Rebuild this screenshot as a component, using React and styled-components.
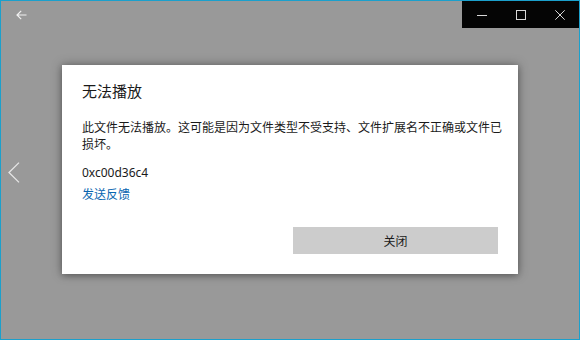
import React from "react";
import styled, { createGlobalStyle } from "styled-components";

const GlobalStyle = createGlobalStyle`
  html, body {
    margin: 0;
    padding: 0;
    background: #999999;
  }
  * {
    box-sizing: border-box;
  }
`;

const Window = styled.div`
  position: relative;
  width: 580px;
  height: 340px;
  border: 1px solid #1ba0cc;
  background: #999999;
  font-family: "Noto Sans", "Noto Sans CJK SC", sans-serif;
  overflow: hidden;
  display: flex;
  flex-direction: column;
`;

const TitleBar = styled.div`
  display: flex;
  justify-content: space-between;
  align-items: flex-start;
  height: 27px;
`;

const BackButton = styled.div`
  width: 40px;
  height: 27px;
  display: flex;
  align-items: center;
  justify-content: center;
  color: #f2f2f2;
`;

const Controls = styled.div`
  display: flex;
  background: #050505;
  height: 27px;
`;

const ControlButton = styled.div`
  width: 39px;
  height: 27px;
  display: flex;
  align-items: center;
  justify-content: center;
  color: #d8d8d8;
`;

const Stage = styled.div`
  flex: 1;
  display: flex;
  align-items: center;
  padding-left: 7px;
  padding-bottom: 22px;
`;

const Chevron = styled.div`
  width: 12px;
  height: 21px;
  color: #e6e6e6;
  display: flex;
`;

const Overlay = styled.div`
  position: absolute;
  inset: 0;
  display: flex;
  align-items: center;
  justify-content: center;
  padding-bottom: 1px;
`;

const Dialog = styled.div`
  width: 456px;
  height: 209px;
  background: #ffffff;
  box-shadow: 0 0 10px rgba(0, 0, 0, 0.35), 0 2px 6px rgba(0, 0, 0, 0.2);
  padding: 16px 20px 0 20px;
  display: flex;
  flex-direction: column;
  color: #1a1a1a;
`;

const Title = styled.div`
  font-family: "Noto Sans CJK SC", sans-serif;
  font-size: 15px;
  line-height: 20px;
  margin-bottom: 17px;
`;

const Body = styled.div`
  font-family: "Noto Sans CJK SC", sans-serif;
  font-size: 12px;
  line-height: 17px;
  margin-right: -8px;
  margin-bottom: ${(p) => p.$gap || 0}px;
`;

const Code = styled.div`
  font-size: 12px;
  line-height: 17px;
  margin-bottom: 4px;
`;

const Link = styled.a`
  font-family: "Noto Sans CJK SC", sans-serif;
  font-size: 12px;
  line-height: 17px;
  color: #0a66b0;
  text-decoration: none;
  align-self: flex-start;
`;

const Actions = styled.div`
  display: grid;
  grid-template-columns: 1fr 1fr;
  gap: 6px;
  margin-top: 25px;
`;

const CloseButton = styled.button`
  grid-column: 2;
  height: 27px;
  border: none;
  background: #cccccc;
  font-family: "Noto Sans CJK SC", sans-serif;
  font-size: 12px;
  color: #1a1a1a;
  padding: 0;
`;

const App = () => (
  <>
    <GlobalStyle />
    <Window>
      <TitleBar>
        <BackButton>
          <svg width="11" height="10" viewBox="0 0 11 10" fill="none" stroke="currentColor" strokeWidth="1.2">
            <path d="M10.5 5H1M5.2 0.8L1 5l4.2 4.2" />
          </svg>
        </BackButton>
        <Controls>
          <ControlButton>
            <svg width="10" height="10" viewBox="0 0 10 10" stroke="currentColor" strokeWidth="1">
              <path d="M0 5.5h10" />
            </svg>
          </ControlButton>
          <ControlButton>
            <svg width="10" height="10" viewBox="0 0 10 10" fill="none" stroke="currentColor" strokeWidth="1">
              <rect x="0.5" y="0.5" width="9" height="9" />
            </svg>
          </ControlButton>
          <ControlButton>
            <svg width="10" height="10" viewBox="0 0 10 10" stroke="currentColor" strokeWidth="1">
              <path d="M0.3 0.3l9.4 9.4M9.7 0.3L0.3 9.7" />
            </svg>
          </ControlButton>
        </Controls>
      </TitleBar>
      <Stage>
        <Chevron>
          <svg width="12" height="21" viewBox="0 0 12 21" fill="none" stroke="currentColor" strokeWidth="1.3">
            <path d="M11 0.6L1 10.5l10 9.9" />
          </svg>
        </Chevron>
      </Stage>
      <Overlay>
        <Dialog>
          <Title>无法播放</Title>
          <Body $gap={12}>
            此文件无法播放。这可能是因为文件类型不受支持、文件扩展名不正确或文件已损坏。
          </Body>
          <Code>0xc00d36c4</Code>
          <Link href="#">发送反馈</Link>
          <Actions>
            <CloseButton>关闭</CloseButton>
          </Actions>
        </Dialog>
      </Overlay>
    </Window>
  </>
);

export default App;
